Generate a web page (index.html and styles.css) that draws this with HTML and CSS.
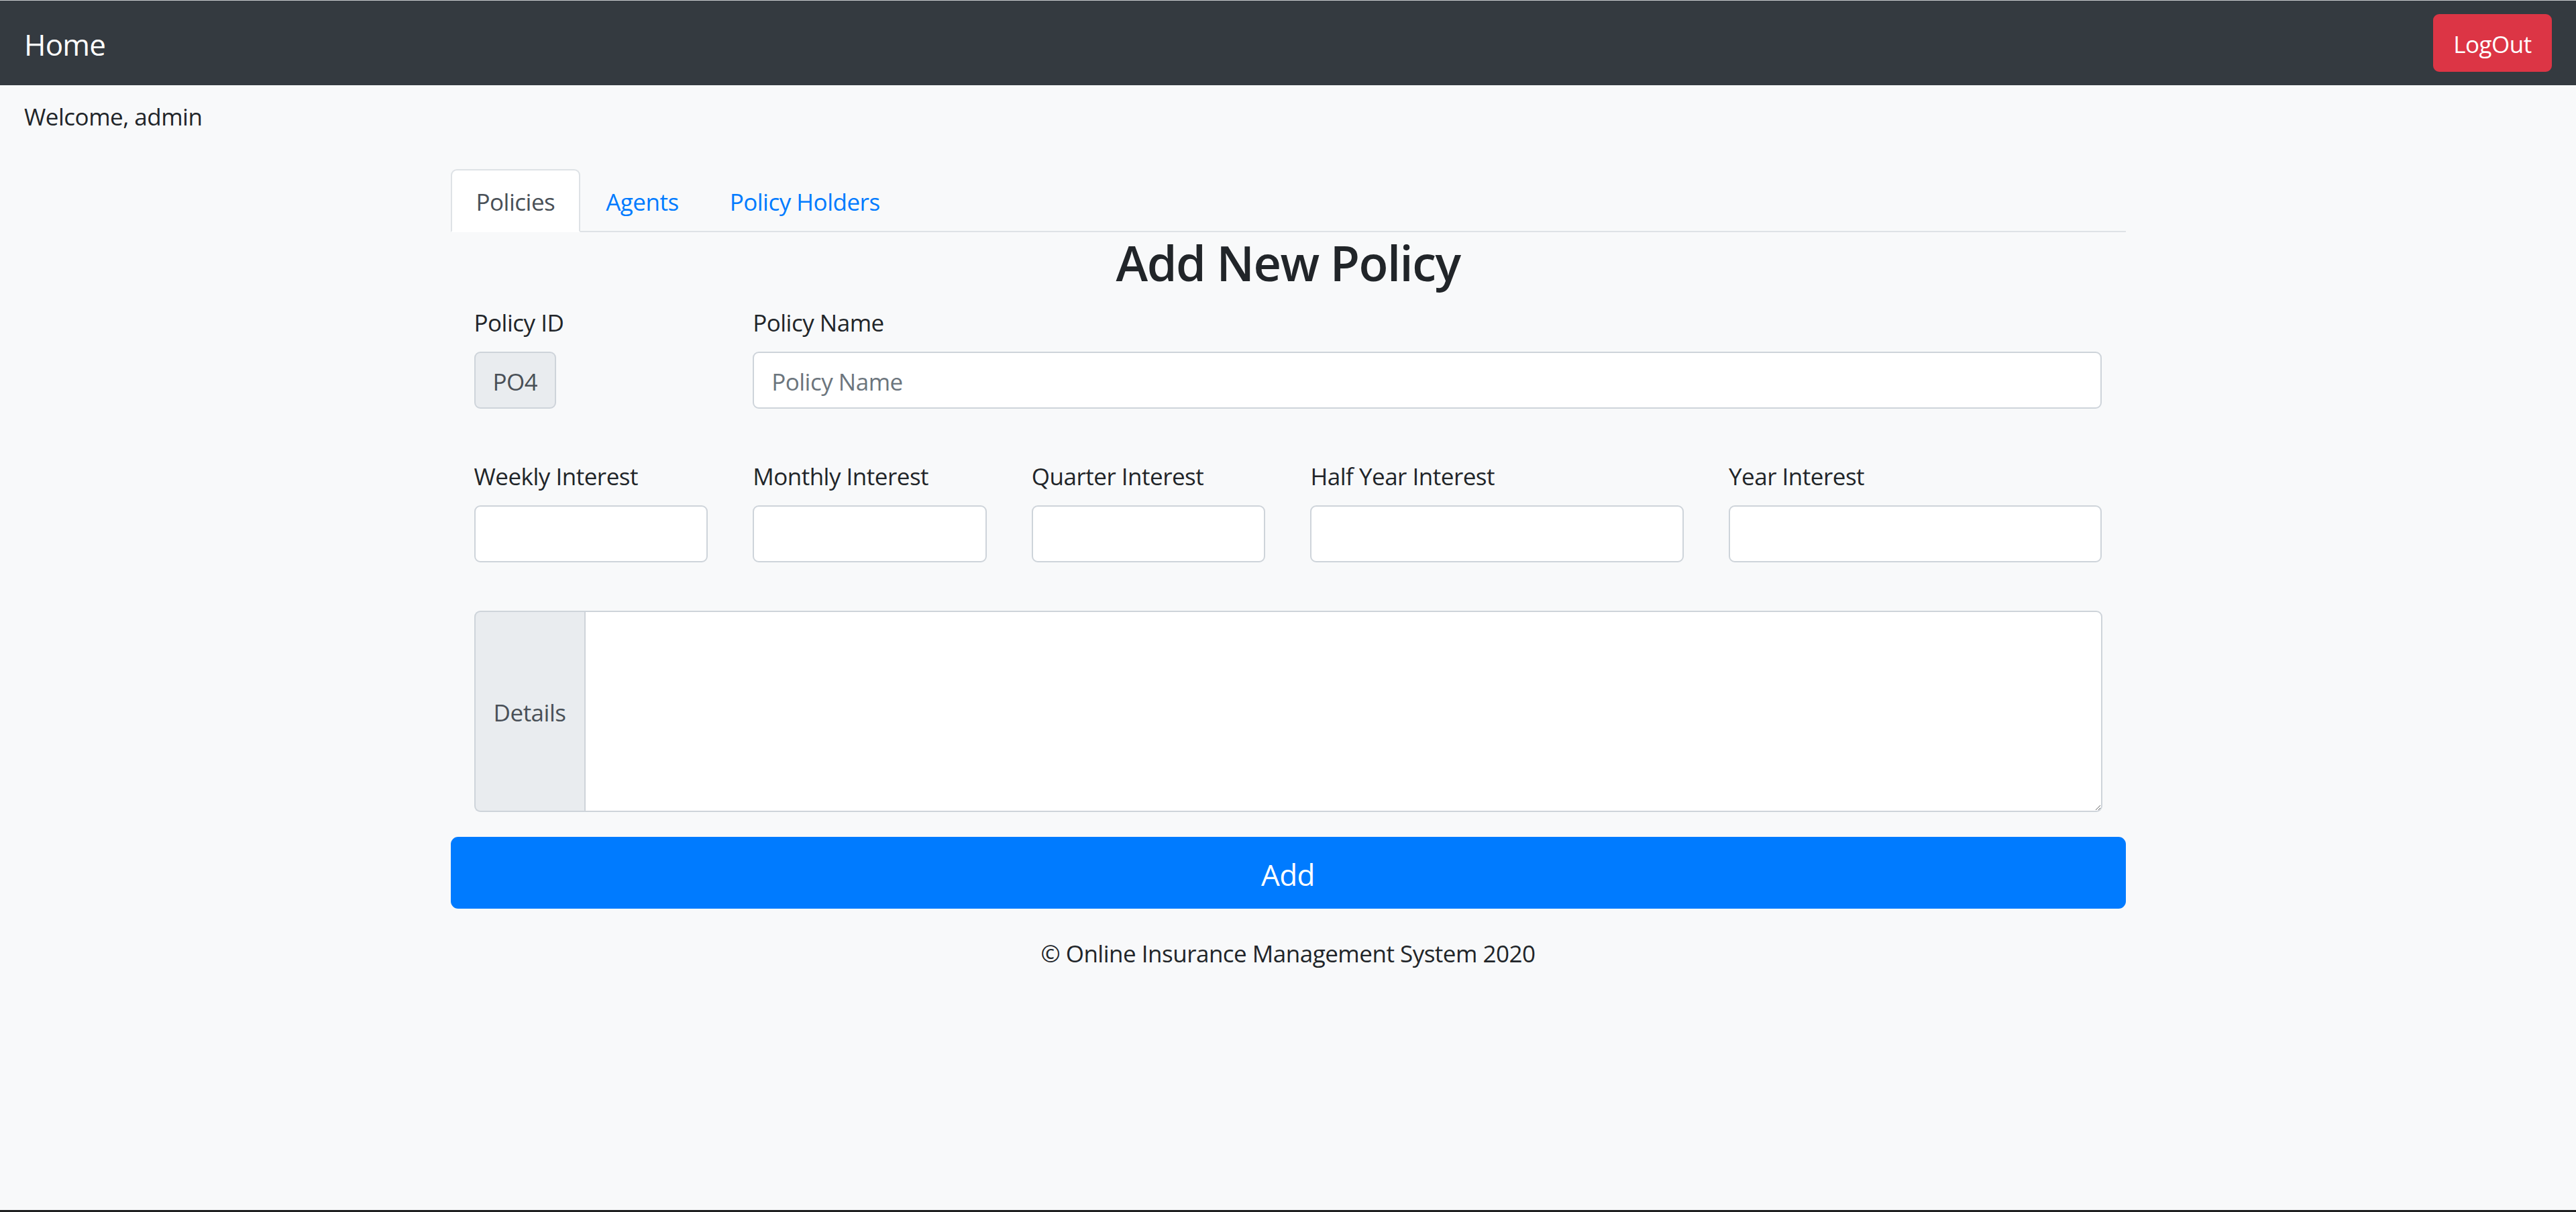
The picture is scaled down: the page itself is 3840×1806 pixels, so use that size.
FILE: index.html
```html
<!DOCTYPE html>
<html lang="en">
<head>
<meta charset="utf-8">
<title>Add New Policy</title>
<link rel="stylesheet" href="styles.css">
</head>
<body>
<div class="page">
  <nav class="navbar">
    <a class="brand" href="#">Home</a>
    <button class="btn btn-danger">LogOut</button>
  </nav>
  <div class="welcome">Welcome, admin</div>

  <main class="container">
    <ul class="nav-tabs">
      <li><a class="nav-link active" href="#">Policies</a></li>
      <li><a class="nav-link" href="#">Agents</a></li>
      <li><a class="nav-link" href="#">Policy Holders</a></li>
    </ul>

    <h2 class="title">Add New Policy</h2>

    <form class="inner">
      <div class="form-row">
        <div class="col span-2">
          <label>Policy ID</label>
          <input class="form-control readonly" value="PO4" readonly>
        </div>
        <div class="col span-10">
          <label>Policy Name</label>
          <input class="form-control" placeholder="Policy Name">
        </div>
      </div>

      <div class="form-row">
        <div class="col span-2">
          <label>Weekly Interest</label>
          <input class="form-control">
        </div>
        <div class="col span-2">
          <label>Monthly Interest</label>
          <input class="form-control">
        </div>
        <div class="col span-2">
          <label>Quarter Interest</label>
          <input class="form-control">
        </div>
        <div class="col span-3">
          <label>Half Year Interest</label>
          <input class="form-control">
        </div>
        <div class="col span-3">
          <label>Year Interest</label>
          <input class="form-control">
        </div>
      </div>

      <div class="input-group">
        <span class="input-group-text">Details</span>
        <textarea class="form-control area" rows="5"></textarea>
      </div>
    </form>

    <button class="btn btn-primary btn-block">Add</button>

    <p class="footer">© Online Insurance Management System 2020</p>
  </main>
</div>
</body>
</html>
```
FILE: styles.css
```css
* { box-sizing: border-box; }

html, body {
  margin: 0;
  padding: 0;
}

body {
  font-family: "Open Sans", "Noto Sans", "Liberation Sans", sans-serif;
  font-size: 35px;
  letter-spacing: -0.5px;
  line-height: 54px;
  color: #212529;
  background: #f8f9fa;
}

.page {
  min-height: 100vh;
  border-top: 1px solid #c9cbce;
  border-bottom: 3px solid #1f2021;
  background: #f8f9fa;
}

.navbar {
  height: 126px;
  background: #343a40;
  display: flex;
  align-items: center;
  justify-content: space-between;
  padding: 0 36px;
}

.brand {
  color: #fff;
  text-decoration: none;
  font-size: 44px;
  line-height: 66px;
  letter-spacing: -0.8px;
  padding-top: 3px;
}

.btn {
  font-family: inherit;
  font-size: 35px;
  letter-spacing: -0.5px;
  line-height: 54px;
  border: 2px solid transparent;
  border-radius: 9px;
  padding: 14px 26px;
  color: #fff;
  cursor: pointer;
}

.btn-danger {
  background: #dc3545;
  border-color: #dc3545;
  width: 177px;
  height: 86px;
  padding: 3px 0 0;
}

.welcome {
  padding: 20px 36px 0;
  height: 72px;
}

.container {
  width: 2497px;
  margin: 53px auto 0;
}

.nav-tabs {
  list-style: none;
  margin: 0;
  padding: 0;
  display: flex;
  border-bottom: 2px solid #dee2e6;
  height: 94px;
}

.nav-tabs li {
  margin-bottom: -2px;
}

.nav-link {
  display: block;
  padding: 20px 36px 16px;
  border: 2px solid transparent;
  border-top-left-radius: 9px;
  border-top-right-radius: 9px;
  color: #007bff;
  text-decoration: none;
  height: 94px;
}

.nav-link.active {
  color: #495057;
  background: #fff;
  border-color: #dee2e6 #dee2e6 #fff;
}

.title {
  margin: 0 0 20px;
  padding-top: 2px;
  height: 86px;
  text-align: center;
  font-size: 72px;
  letter-spacing: -1.5px;
  line-height: 86px;
  font-weight: 600;
}

.inner {
  padding: 0 35px;
}

.form-row {
  display: grid;
  grid-template-columns: repeat(12, 1fr);
  column-gap: 67px;
  margin-bottom: 72px;
}

.span-2 { grid-column: span 2; }
.span-3 { grid-column: span 3; }
.span-10 { grid-column: span 10; }

.col label {
  display: block;
  padding-top: 2px;
  margin-bottom: 16px;
}

.form-control {
  display: block;
  width: 100%;
  height: 85px;
  padding: 15px 26px 11px;
  font-family: inherit;
  font-size: 35px;
  letter-spacing: -0.5px;
  line-height: 54px;
  color: #495057;
  background: #fff;
  border: 2px solid #ced4da;
  border-radius: 9px;
  outline: none;
}

.form-control::placeholder {
  color: #6c757d;
}

.form-control.readonly {
  width: 122px;
  background: #e9ecef;
}

.input-group {
  display: flex;
  height: 300px;
  margin-bottom: 37px;
}

.input-group-text {
  width: 164px;
  flex: none;
  display: flex;
  align-items: center;
  justify-content: center;
  padding-top: 4px;
  background: #e9ecef;
  color: #495057;
  border: 2px solid #ced4da;
  border-right: none;
  border-radius: 9px 0 0 9px;
}

.form-control.area {
  height: 300px;
  flex: 1;
  border-radius: 0 9px 9px 0;
  resize: vertical;
}

.btn-primary {
  background: #007bff;
  border-color: #007bff;
}

.btn-block {
  display: block;
  width: 100%;
  height: 107px;
  font-size: 44px;
  letter-spacing: -0.6px;
  line-height: 67px;
  padding: 21px 36px 15px;
  border-radius: 11px;
}

.footer {
  margin: 40px 0 0;
  text-align: center;
}
```
